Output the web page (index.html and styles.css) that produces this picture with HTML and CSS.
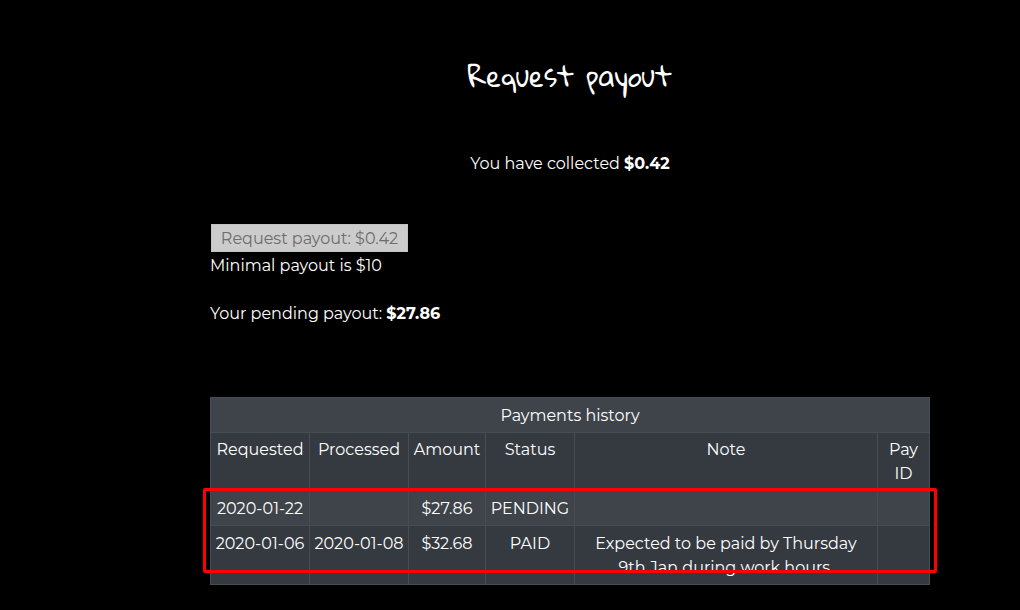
FILE: index.html
```html
<!DOCTYPE html>
<html lang="en">
<head>
<meta charset="utf-8">
<title>Request payout</title>
<link rel="stylesheet" href="styles.css">
</head>
<body>
<main class="page">
  <h1 class="title">Request payout</h1>
  <p class="collected">You have collected <strong>$0.42</strong></p>
  <button class="payout-button" type="button" disabled>Request payout: $0.42</button>
  <p class="line">Minimal payout is $10</p>
  <p class="line pending">Your pending payout: <strong>$27.86</strong></p>
  <div class="history">
    <table class="table">
      <colgroup>
        <col class="col-date"><col class="col-date"><col class="col-amount"><col class="col-status"><col><col class="col-id">
      </colgroup>
      <thead>
        <tr class="light"><th colspan="6">Payments history</th></tr>
        <tr class="heads"><th>Requested</th><th>Processed</th><th>Amount</th><th>Status</th><th>Note</th><th>Pay<br>ID</th></tr>
      </thead>
      <tbody>
        <tr class="light"><td>2020-01-22</td><td></td><td>$27.86</td><td>PENDING</td><td></td><td></td></tr>
        <tr><td>2020-01-06</td><td>2020-01-08</td><td>$32.68</td><td>PAID</td><td>Expected to be paid by Thursday<br>9th Jan during work hours.</td><td></td></tr>
      </tbody>
    </table>
    <div class="highlight"></div>
  </div>
</main>
</body>
</html>
```
FILE: styles.css
```css
body {
  margin: 0;
  background: #000;
  color: #fff;
  font: 16px/24px Montserrat, Inter, sans-serif;
}
.page {
  padding: 56px 90px 24px 210px;
}
.title {
  margin: 0;
  font: 400 27px/40px "Gloria Hallelujah", Lato, sans-serif;
  text-align: center;
}
.collected {
  margin: 56px 0 48px;
  text-align: center;
}
.payout-button {
  display: block;
  box-sizing: border-box;
  width: 197px;
  height: 28px;
  margin: 0 0 2px 1px;
  padding: 2px 0 0;
  border: 1px solid #c2c2c2;
  background: #ccc;
  color: #6d6d6d;
  font: inherit;
  white-space: nowrap;
}
.line {
  margin: 0;
}
.pending {
  margin: 24px 0 71px;
}
.history {
  position: relative;
}
.table {
  width: 100%;
  table-layout: fixed;
  border-collapse: collapse;
  background: #343a40;
  text-align: center;
}
.col-date {
  width: 99px;
}
.col-amount {
  width: 77px;
}
.col-status {
  width: 89px;
}
.col-id {
  width: 52px;
}
.table th,
.table td {
  padding: 6px 0 4px;
  border: 1px solid #454d55;
  font-weight: 400;
  vertical-align: top;
  white-space: nowrap;
}
.table .heads th {
  padding: 5px 0 4px;
}
.light {
  background: #3e444a;
}
.highlight {
  position: absolute;
  top: 91px;
  right: -7px;
  bottom: 12px;
  left: -7px;
  border: 3px solid #f00;
  border-radius: 2px;
}
```
